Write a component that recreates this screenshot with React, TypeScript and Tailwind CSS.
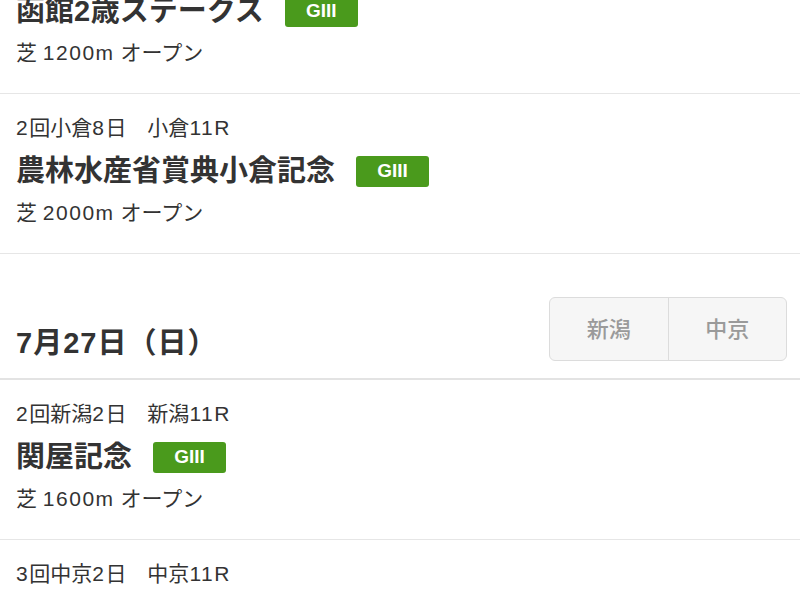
import React from "react";

type Race = { meta: string; title: string; info: string };

const font = { fontFamily: '"Liberation Sans", "Noto Sans CJK JP", sans-serif' };

function T({ s, wide }: { s: string; wide?: boolean }) {
  const parts = s.split(/([!-~]+)/).filter((p) => p.length > 0);
  return (
    <>
      {parts.map((p, i) =>
        /^[!-~]+$/.test(p) ? (
          <span key={i} className={wide ? "tracking-[1.5px]" : "tracking-[0.5px]"}>
            {p}
          </span>
        ) : (
          <span key={i}>{p}</span>
        )
      )}
    </>
  );
}

function Badge() {
  return (
    <span
      className="ml-[21px] inline-flex h-[31px] w-[73px] items-center justify-center rounded-[3px] bg-[#4a9a1c] text-[19px] font-bold text-white"
      style={{ fontFamily: '"Liberation Sans", "Noto Sans", sans-serif' }}
    >
      GIII
    </span>
  );
}

function RaceCard({ race }: { race: Race }) {
  return (
    <div className="h-[160px] border-b border-[#e6e6e6] px-4 pt-[22px]">
      <div className="h-6 whitespace-pre text-[21px] leading-6 text-[#333]">
        <T s={race.meta} wide />
      </div>
      <div className="mt-[13px] flex h-9 items-center">
        <span className="text-[29px] font-bold leading-9 text-[#333]">
          <T s={race.title} />
        </span>
        <Badge />
      </div>
      <div className="mt-3 h-6 whitespace-pre text-[21px] leading-6 text-[#333]">
        <T s={race.info} wide />
      </div>
    </div>
  );
}

export default function App() {
  const day1: Race[] = [
    { meta: "1回函館6日　函館11R", title: "函館2歳ステークス", info: "芝 1200m オープン" },
    { meta: "2回小倉8日　小倉11R", title: "農林水産省賞典小倉記念", info: "芝 2000m オープン" },
  ];
  const day2: Race[] = [
    { meta: "2回新潟2日　新潟11R", title: "関屋記念", info: "芝 1600m オープン" },
    { meta: "3回中京2日　中京11R", title: "中京記念", info: "芝 1600m オープン" },
  ];
  return (
    <div className="h-[600px] w-[800px] overflow-hidden bg-white" style={font}>
      <div className="-mt-[66px]">
        {day1.map((r) => (
          <RaceCard key={r.title} race={r} />
        ))}
        <div className="flex h-[126px] items-end justify-between border-b-2 border-[#e3e3e3] pb-[17px] pl-4 pr-[13px]">
          <div className="text-[29px] font-bold leading-9 tracking-[1px] text-[#333]">7月27日（日）</div>
          <div className="flex h-16 w-[238px] overflow-hidden rounded-[6px] border border-[#dcdcdc] bg-[#f6f6f6]">
            <div className="flex flex-1 items-center justify-center border-r border-[#dcdcdc] text-[22px] font-medium text-[#9a9a9a]">
              新潟
            </div>
            <div className="flex flex-1 items-center justify-center text-[22px] font-medium text-[#9a9a9a]">
              中京
            </div>
          </div>
        </div>
        {day2.map((r) => (
          <RaceCard key={r.title} race={r} />
        ))}
      </div>
    </div>
  );
}
